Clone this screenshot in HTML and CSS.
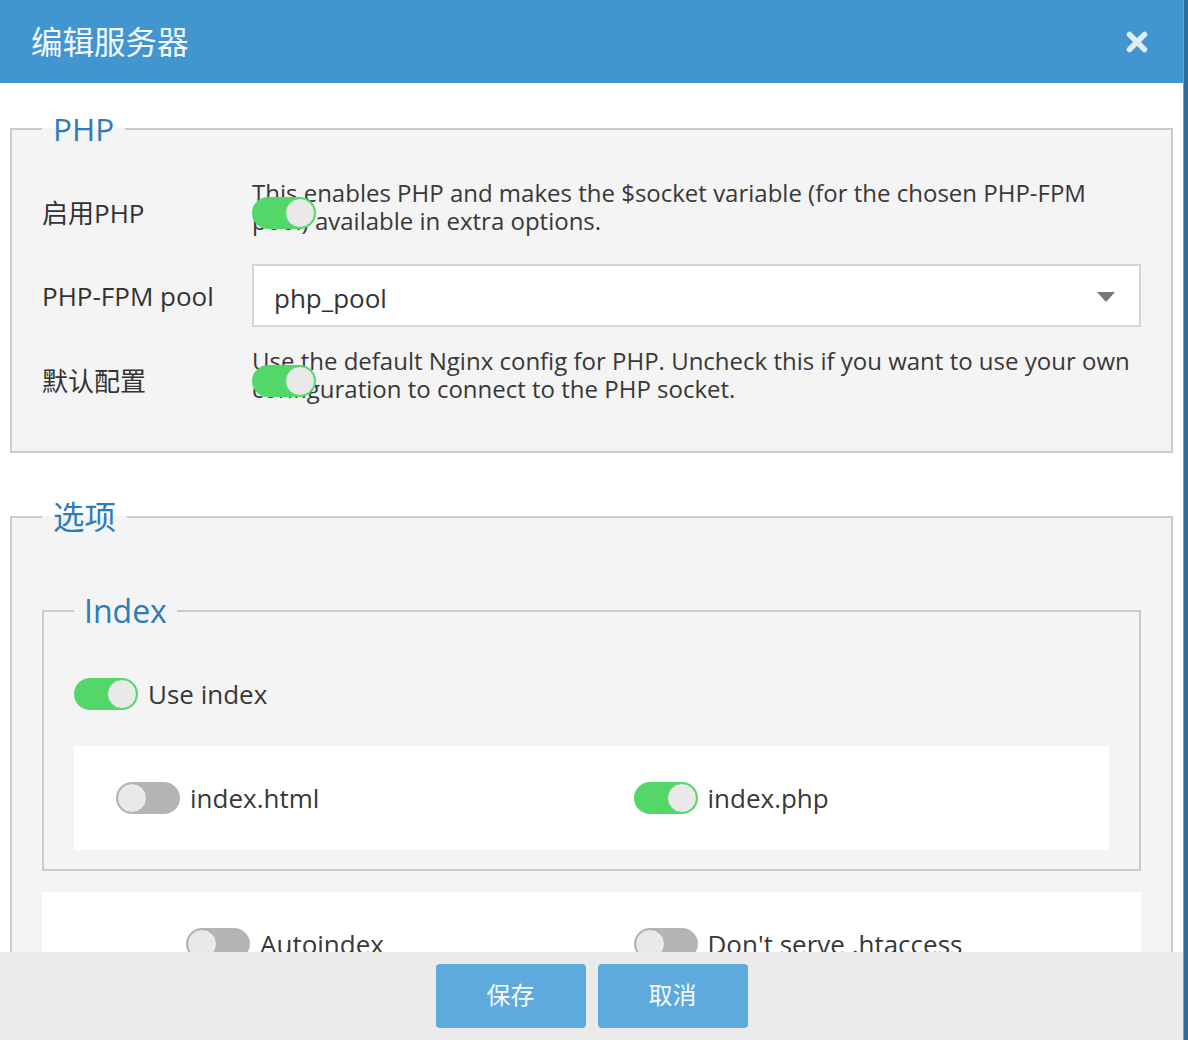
FILE: index.html
```html
<!DOCTYPE html>
<html lang="zh">
<head>
<meta charset="utf-8">
<title>编辑服务器</title>
<link rel="stylesheet" href="styles.css">
</head>
<body>
<div class="dialog">
  <header class="dlg-head">
    <h1 class="dlg-title">编辑服务器</h1>
    <button class="dlg-close" type="button" aria-label="close">
      <svg width="22" height="22" viewBox="0 0 22 22"><path d="M3.5 3.5 L18.5 18.5 M18.5 3.5 L3.5 18.5" stroke="currentColor" stroke-width="5.5" stroke-linecap="round" fill="none"/></svg>
    </button>
  </header>

  <div class="dlg-body">
    <fieldset class="group group-php">
      <legend class="group-legend">PHP</legend>

      <div class="form-row">
        <label class="row-label row-label-top">启用PHP</label>
        <div class="row-ctrl">
          <p class="help">This enables PHP and makes the $socket variable (for the chosen PHP-FPM pool) available in extra options.</p>
          <span class="switch on switch-over"><span class="knob"></span></span>
        </div>
      </div>

      <div class="form-row form-row-select">
        <label class="row-label row-label-mid">PHP-FPM pool</label>
        <div class="row-ctrl">
          <div class="select">
            <span class="select-value">php_pool</span>
            <span class="select-arrow"></span>
          </div>
        </div>
      </div>

      <div class="form-row form-row-last">
        <label class="row-label row-label-top">默认配置</label>
        <div class="row-ctrl">
          <p class="help">Use the default Nginx config for PHP. Uncheck this if you want to use your own configuration to connect to the PHP socket.</p>
          <span class="switch on switch-over"><span class="knob"></span></span>
        </div>
      </div>
    </fieldset>

    <fieldset class="group group-options">
      <legend class="group-legend">选项</legend>

      <fieldset class="group group-index">
        <legend class="group-legend group-legend-sm">Index</legend>
        <div class="check-item">
          <span class="switch on"><span class="knob"></span></span>
          <span class="check-text">Use index</span>
        </div>
        <div class="card card-index">
          <div class="card-col">
            <div class="check-item">
              <span class="switch off"><span class="knob"></span></span>
              <span class="check-text">index.html</span>
            </div>
          </div>
          <div class="card-col">
            <div class="check-item">
              <span class="switch on"><span class="knob"></span></span>
              <span class="check-text">index.php</span>
            </div>
          </div>
        </div>
      </fieldset>

      <div class="card card-extra">
        <div class="card-col card-col-wide">
          <div class="check-item">
            <span class="switch off"><span class="knob"></span></span>
            <span class="check-text">Autoindex</span>
          </div>
        </div>
        <div class="card-col">
          <div class="check-item">
            <span class="switch off"><span class="knob"></span></span>
            <span class="check-text">Don't serve .htaccess</span>
          </div>
        </div>
      </div>
    </fieldset>
  </div>

  <footer class="dlg-foot">
    <button class="btn" type="button">保存</button>
    <button class="btn" type="button">取消</button>
  </footer>
</div>
</body>
</html>
```

FILE: styles.css
```css
* { box-sizing: border-box; }

html, body {
  margin: 0;
  padding: 0;
  height: 100%;
}

body {
  background: #2f6d9e;
  font-family: "Open Sans", "Noto Sans CJK SC", sans-serif;
  color: #363636;
  overflow: hidden;
}

.dialog {
  width: 1184px;
  height: 1040px;
  display: flex;
  flex-direction: column;
  background: #ffffff;
  border-right: 1px solid #8d9aa6;
}

/* header */
.dlg-head {
  flex: 0 0 83px;
  height: 83px;
  background: #4296cf;
  display: flex;
  align-items: center;
  justify-content: space-between;
  padding: 0 35px 4px 31px;
}

.dlg-title {
  margin: 0;
  font-family: "Noto Sans CJK SC", sans-serif;
  font-weight: 400;
  font-size: 31.5px;
  line-height: 40px;
  color: #f3f8fc;
}

.dlg-close {
  border: 0;
  background: transparent;
  padding: 0;
  width: 22px;
  height: 22px;
  color: #e2eef7;
  display: flex;
  margin-top: 4px;
}

/* body */
.dlg-body {
  flex: 1 1 auto;
  overflow: hidden;
  padding: 0 10px;
}

.group {
  margin: 0;
  border: 2px solid #cbcbcb;
  background: #f4f4f4;
  padding: 0 30px;
  min-width: 0;
}

.group-php {
  margin-top: 26px;
  padding-top: 30px;
  padding-bottom: 48px;
}

.group-options {
  margin-top: 44px;
  padding-top: 54px;
  padding-bottom: 0;
}

.group-legend {
  padding: 0 11px;
  font-size: 31.5px;
  line-height: 40px;
  color: #2c7bba;
  font-weight: 400;
  font-family: "Open Sans", "Noto Sans CJK SC", sans-serif;
}

.group-legend-sm {
  padding: 0 10px;
  font-size: 32px;
}

/* rows */
.form-row {
  display: grid;
  grid-template-columns: 210px 1fr;
  align-items: start;
}

.form-row-select {
  margin-top: 29px;
  align-items: center;
}

.form-row-last {
  margin-top: 20px;
}

.row-label {
  font-size: 26px;
  line-height: 28px;
  color: #333;
}

.row-label-top {
  margin-top: 20px;
}

.row-ctrl {
  position: relative;
}

.help {
  margin: 0;
  font-size: 24px;
  line-height: 28px;
  color: #383838;
}

.switch-over {
  position: absolute;
  left: 0;
  top: 18px;
}

/* select */
.select {
  height: 63px;
  border: 2px solid #d5d5d5;
  background: #fff;
  display: flex;
  align-items: center;
  justify-content: space-between;
  padding: 0 24px 0 20px;
}

.select-value {
  font-size: 26px;
  color: #333;
  line-height: 28px;
  margin-top: 4px;
}

.select-arrow {
  width: 0;
  height: 0;
  border-left: 9px solid transparent;
  border-right: 9px solid transparent;
  border-top: 10px solid #777;
  margin-top: 2px;
}

/* switches */
.switch {
  width: 64px;
  height: 32px;
  border-radius: 16px;
  display: inline-flex;
  align-items: center;
  padding: 1px;
  flex: 0 0 auto;
}

.switch.on {
  background: #53d769;
  justify-content: flex-end;
}

.switch.off {
  background: #b4b4b4;
  justify-content: flex-start;
}

.knob {
  width: 30px;
  height: 30px;
  border-radius: 50%;
  background: #e9e9e9;
}

.switch.on .knob {
  border: 1px solid #53d769;
}

.switch.off .knob {
  border: 1px solid #b0b0b0;
}

/* index group */
.group-index {
  padding-top: 47px;
  padding-bottom: 19px;
}

.check-item {
  display: flex;
  align-items: center;
  gap: 10px;
}

.check-text {
  font-size: 26px;
  line-height: 32px;
  color: #383838;
}

.card {
  background: #ffffff;
  display: grid;
  grid-template-columns: 1fr 1fr;
  align-items: start;
}

.card-index {
  margin-top: 36px;
  height: 104px;
  padding-top: 36px;
}

.card-col {
  padding-left: 42px;
}

.card-col-wide {
  padding-left: 144px;
}

.card-extra {
  margin-top: 21px;
  height: 104px;
  padding-top: 36px;
}

/* footer */
.dlg-foot {
  flex: 0 0 88px;
  height: 88px;
  background: #ebebeb;
  display: flex;
  justify-content: center;
  align-items: flex-start;
  gap: 12px;
  padding-top: 12px;
}

.btn {
  width: 150px;
  height: 64px;
  border: 0;
  border-radius: 4px;
  background: #5eaadd;
  color: #f5f9fc;
  font-family: "Noto Sans CJK SC", sans-serif;
  font-size: 24px;
  line-height: 28px;
  padding: 0 0 4px;
}
```
